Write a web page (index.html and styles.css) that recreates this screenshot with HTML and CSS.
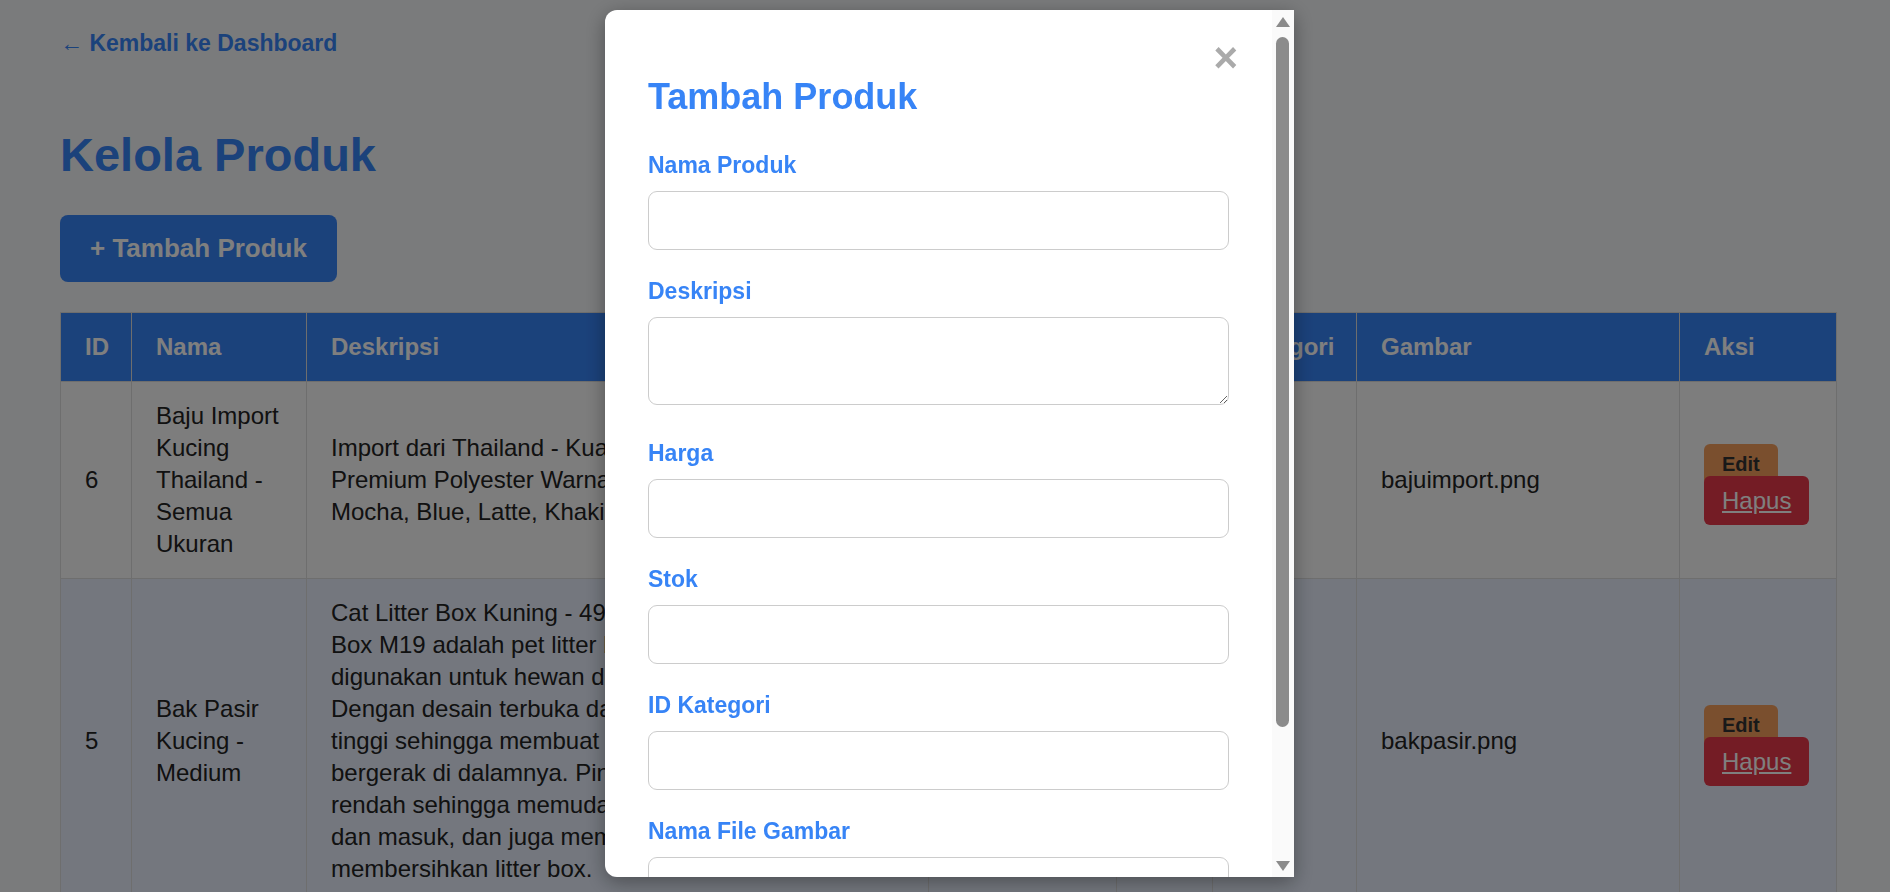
FILE: index.html
```html
<!DOCTYPE html>
<html lang="id">
<head>
<meta charset="utf-8">
<title>Kelola Produk</title>
<link rel="stylesheet" href="styles.css">
</head>
<body>
<div class="page">
  <a href="#" class="back-link">← Kembali ke Dashboard</a>
  <h1 class="page-title">Kelola Produk</h1>
  <div class="toolbar">
    <button type="button" class="btn-add">+ Tambah Produk</button>
  </div>
  <table class="product-table">
    <colgroup>
      <col class="col-id">
      <col class="col-nama">
      <col class="col-desc">
      <col class="col-harga">
      <col class="col-stok">
      <col class="col-kategori">
      <col class="col-gambar">
      <col class="col-aksi">
    </colgroup>
    <thead>
      <tr>
        <th>ID</th>
        <th>Nama</th>
        <th>Deskripsi</th>
        <th>Harga</th>
        <th>Stok</th>
        <th>Kategori</th>
        <th>Gambar</th>
        <th>Aksi</th>
      </tr>
    </thead>
    <tbody>
      <tr>
        <td>6</td>
        <td>Baju Import Kucing Thailand - Semua Ukuran</td>
        <td>Import dari Thailand - Kualitas Bahan Tebal Lembut Premium Polyester Warna Tersedia: Coklat, Cream, Mocha, Blue, Latte, Khaki Size S - XL</td>
        <td>Rp 85.000</td>
        <td>15</td>
        <td>2</td>
        <td>bajuimport.png</td>
        <td><button type="button" class="btn-edit">Edit</button> <a href="#" class="btn-delete">Hapus</a></td>
      </tr>
      <tr>
        <td>5</td>
        <td>Bak Pasir Kucing - Medium</td>
        <td>Cat Litter Box Kuning - 49cm x 39cm x 14cm Litter Box M19 adalah pet litter box praktis yang dapat digunakan untuk hewan dengan ukuran tubuh kecil. Dengan desain terbuka dan sisi dinding yang cukup tinggi sehingga membuat kucing nyaman saat bergerak di dalamnya. Pintu masuk dibuat lebih rendah sehingga memudahkan kucing untuk keluar dan masuk, dan juga memudahkan pemilik saat membersihkan litter box.</td>
        <td>Rp 120.000</td>
        <td>8</td>
        <td>3</td>
        <td>bakpasir.png</td>
        <td><button type="button" class="btn-edit">Edit</button> <a href="#" class="btn-delete">Hapus</a></td>
      </tr>
    </tbody>
  </table>
</div>

<div class="modal-overlay">
  <div class="modal">
    <div class="modal-body">
      <button type="button" class="modal-close">×</button>
      <h2 class="modal-title">Tambah Produk</h2>
      <form class="modal-form">
        <div class="form-group">
          <label for="nama">Nama Produk</label>
          <input type="text" id="nama">
        </div>
        <div class="form-group">
          <label for="deskripsi">Deskripsi</label>
          <textarea id="deskripsi"></textarea>
        </div>
        <div class="form-group">
          <label for="harga">Harga</label>
          <input type="text" id="harga">
        </div>
        <div class="form-group">
          <label for="stok">Stok</label>
          <input type="text" id="stok">
        </div>
        <div class="form-group">
          <label for="kategori">ID Kategori</label>
          <input type="text" id="kategori">
        </div>
        <div class="form-group">
          <label for="gambar">Nama File Gambar</label>
          <input type="text" id="gambar">
        </div>
        <button type="submit" class="btn-submit">Simpan</button>
      </form>
    </div>
    <div class="modal-scrollbar" aria-hidden="true">
      <span class="scroll-arrow scroll-arrow-up"></span>
      <div class="scroll-track"><div class="scroll-thumb"></div></div>
      <span class="scroll-arrow scroll-arrow-down"></span>
    </div>
  </div>
</div>
</body>
</html>
```

FILE: styles.css
```css
* {
  box-sizing: border-box;
}

html,
body {
  margin: 0;
}

body {
  font-family: "Liberation Sans", Arial, sans-serif;
  font-size: 24px;
  line-height: 32px;
  color: #222;
  background: #f4f6f9;
  overflow: hidden;
}

.page {
  padding: 27px 54px 0 60px;
}

.back-link {
  display: inline-block;
  font-size: 23px;
  font-weight: bold;
  color: #3784f6;
  text-decoration: none;
}

.page-title {
  font-size: 47px;
  line-height: 58px;
  margin: 67px 0 31px;
  color: #3784f6;
}

.toolbar {
  display: flex;
  margin-bottom: 30px;
}

.btn-add {
  font-family: "Liberation Sans", Arial, sans-serif;
  font-size: 26px;
  font-weight: bold;
  line-height: normal;
  padding: 18px 30px;
  background: #3784f6;
  color: #fff;
  border: none;
  border-radius: 8px;
}

.product-table {
  width: 100%;
  border-collapse: collapse;
  table-layout: fixed;
}

.col-id { width: 71px; }
.col-nama { width: 175px; }
.col-desc { width: 622px; }
.col-harga { width: 188px; }
.col-stok { width: 96px; }
.col-kategori { width: 144px; }
.col-gambar { width: 323px; }
.col-aksi { width: 157px; }

.product-table th,
.product-table td {
  border: 1px solid #dcdcdc;
  padding: 18px 24px;
  text-align: left;
  vertical-align: middle;
}

.product-table th {
  background: #3784f6;
  color: #fff;
  font-weight: bold;
}

.product-table tbody tr:nth-child(odd) td {
  background: #fafafa;
}

.product-table tbody tr:nth-child(even) td {
  background: #e8effd;
}

.btn-edit {
  font-family: "Liberation Sans", Arial, sans-serif;
  font-size: 20px;
  font-weight: bold;
  line-height: normal;
  padding: 9px 18px;
  background: #f49e5d;
  color: #333;
  border: none;
  border-radius: 6px;
}

.btn-delete {
  padding: 11px 18px;
  background: #e8394a;
  color: #fff;
  border-radius: 6px;
  text-decoration: underline;
}

/* Modal */
.modal-overlay {
  position: fixed;
  inset: 0;
  background: rgba(0, 0, 0, 0.5);
  display: flex;
  justify-content: center;
  align-items: flex-start;
  padding-top: 10px;
}

.modal {
  display: flex;
  width: 689px;
  height: 867px;
  margin-left: 9px;
  overflow: hidden;
  background: #fff;
  border-radius: 12px 0 0 12px;
  box-shadow: 0 5px 20px rgba(0, 0, 0, 0.35);
}

.modal-body {
  position: relative;
  flex: 1;
  min-width: 0;
  overflow-y: auto;
  scrollbar-width: none;
  padding: 43px;
}

.modal-scrollbar {
  flex: none;
  width: 22px;
  display: flex;
  flex-direction: column;
  background: #fafafa;
}

.scroll-arrow {
  flex: none;
  height: 24px;
  display: flex;
  align-items: center;
  justify-content: center;
}

.scroll-arrow::before {
  content: "";
  display: block;
  border-left: 7.5px solid transparent;
  border-right: 7.5px solid transparent;
}

.scroll-arrow-up::before {
  border-bottom: 10px solid #8b8b8b;
  margin-right: 1px;
}

.scroll-arrow-down::before {
  border-top: 10px solid #8b8b8b;
  margin-top: 2px;
  margin-right: 1px;
}

.scroll-track {
  flex: 1;
  padding: 3px 5px 3px 4px;
}

.scroll-thumb {
  height: 690px;
  background: #8b8b8b;
  border-radius: 7px;
}

.modal-close {
  position: absolute;
  top: 27px;
  right: 34px;
  height: 42px;
  padding: 0;
  border: none;
  background: none;
  font-family: "Liberation Sans", Arial, sans-serif;
  font-size: 42px;
  font-weight: bold;
  line-height: 42px;
  color: #aaa;
  cursor: pointer;
}

.modal-title {
  font-size: 36px;
  line-height: 44px;
  margin: 22px 0 30px;
  color: #3784f6;
}

.form-group {
  margin-bottom: 25px;
}

.form-group label {
  display: block;
  font-size: 23px;
  font-weight: bold;
  line-height: 32px;
  margin-bottom: 10px;
  color: #3784f6;
}

.form-group input,
.form-group textarea {
  display: block;
  width: 100%;
  height: 59px;
  padding: 0 15px;
  border: 1px solid #ccc;
  border-radius: 9px;
  background: #fff;
  font-family: "Liberation Sans", Arial, sans-serif;
  font-size: 24px;
}

.form-group textarea {
  height: 88px;
  padding: 12px 15px;
  margin-bottom: 32px;
}

.btn-submit {
  display: block;
  width: 100%;
  height: 45px;
  border: none;
  border-radius: 6px;
  background: #3784f6;
  color: #fff;
  font-family: "Liberation Sans", Arial, sans-serif;
  font-size: 24px;
  font-weight: bold;
}
```
